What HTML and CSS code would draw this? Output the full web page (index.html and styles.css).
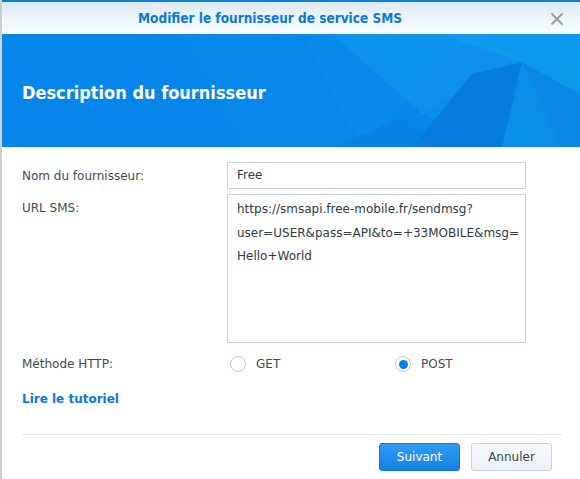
FILE: index.html
```html
<!DOCTYPE html>
<html lang="fr">
<head>
<meta charset="utf-8">
<title>Modifier le fournisseur de service SMS</title>
<link rel="stylesheet" href="styles.css">
</head>
<body>
<div class="dialog">
  <div class="topline"></div>
  <div class="titlebar">
    <span class="title">Modifier le fournisseur de service SMS</span>
    <svg class="close" width="14" height="14" viewBox="0 0 14 14"><path d="M1.5 1.5 L12.5 12.5 M12.5 1.5 L1.5 12.5" stroke="#9c9c9c" stroke-width="1.8" fill="none"/></svg>
  </div>
  <div class="banner">
    <svg class="banner-bg" width="578" height="113" viewBox="0 0 578 113" preserveAspectRatio="none">
      <rect x="0" y="0" width="578" height="113" fill="#0685ea"/>
      <polygon points="180,0 330,0 380,113 240,113" fill="#0a88ea" opacity="0.6"/>
      <polygon points="300,0 470,0 360,113" fill="#0b8eec" opacity="0.6"/>
      <polygon points="330,0 480,0 520,28 420,80" fill="#1399ec" opacity="0.6"/>
      <polygon points="440,0 578,0 578,18 520,28" fill="#12a0ee" opacity="0.7"/>
      <polygon points="420,80 520,28 578,80 578,113 500,113" fill="#0a8fe7"/>
      <polygon points="520,28 578,10 578,80" fill="#0b9aea"/>
      <polygon points="410,113 470,40 520,28 500,113" fill="#0877d9" opacity="0.8"/>
      <polygon points="330,113 400,85 430,113" fill="#0a7fe0" opacity="0.8"/>
      <polygon points="520,28 560,113 578,113 578,60" fill="#0a84e2" opacity="0.8"/>
    </svg>
    <h1 class="banner-title">Description du fournisseur</h1>
  </div>
  <div class="form">
    <div class="row">
      <label class="label">Nom du fournisseur:</label>
      <div class="field input">Free</div>
    </div>
    <div class="row">
      <label class="label">URL SMS:</label>
      <div class="field textarea">https://smsapi.free-mobile.fr/sendmsg?<br>user=USER&amp;pass=API&amp;to=+33MOBILE&amp;msg=<br>Hello+World</div>
    </div>
    <div class="row radio-row">
      <label class="label">Méthode HTTP:</label>
      <div class="radios">
        <span class="radio"><span class="dot"></span>GET</span>
        <span class="radio checked"><span class="dot"></span>POST</span>
      </div>
    </div>
    <a class="link" href="#">Lire le tutoriel</a>
  </div>
  <div class="footer">
    <button class="btn primary">Suivant</button>
    <button class="btn">Annuler</button>
  </div>
</div>
</body>
</html>
```
FILE: styles.css
```css
html, body {
  margin: 0;
  padding: 0;
  height: 100%;
}
body {
  background: #cfcfcf;
  font-family: "DejaVu Sans", Verdana, sans-serif;
  overflow: hidden;
}
.dialog {
  margin-left: 2px;
  width: 578px;
  height: 479px;
  background: #ffffff;
  display: flex;
  flex-direction: column;
}
.topline {
  height: 2px;
  background: #0b7fe0;
}
.titlebar {
  height: 32px;
  position: relative;
  display: flex;
  align-items: center;
  padding-left: 136px;
  background: linear-gradient(#dcebf8, #fbfdff);
}
.title {
  color: #0a7ad5;
  font-weight: bold;
  font-size: 13.5px;
  font-stretch: condensed;
}
.close {
  position: absolute;
  right: 16px;
  top: 10px;
}
.banner {
  height: 113px;
  position: relative;
  overflow: hidden;
  display: flex;
  align-items: center;
}
.banner-bg {
  position: absolute;
  left: 0;
  top: 0;
}
.banner-title {
  position: relative;
  margin: 0 0 0 20px;
  padding-top: 4px;
  color: #ffffff;
  font-size: 18px;
  font-stretch: condensed;
  font-weight: bold;
}
.form {
  padding: 15px 0 0 20px;
  display: flex;
  flex-direction: column;
  gap: 5px;
  font-size: 12px;
  color: #414b55;
}
.row {
  display: flex;
}
.label {
  width: 205px;
  padding-top: 7px;
}
.field {
  width: 299px;
  box-sizing: border-box;
  border: 1px solid #c6d0da;
  color: #303a44;
}
.input {
  height: 27px;
  padding: 0 9px;
  line-height: 25px;
}
.textarea {
  height: 149px;
  padding: 3px 9px;
  line-height: 23.5px;
}
.radio-row {
  margin-top: 8px;
  align-items: center;
}
.radio-row .label {
  padding-top: 0;
}
.radios {
  display: flex;
}
.radio {
  display: flex;
  align-items: center;
  width: 162px;
  gap: 10px;
  padding-left: 3px;
  color: #414b55;
  font-size: 12px;
}
.dot {
  width: 16px;
  height: 16px;
  box-sizing: border-box;
  border: 1px solid #bfcbd7;
  border-radius: 50%;
  background: #fff;
  display: flex;
  align-items: center;
  justify-content: center;
}
.checked .dot::after {
  content: "";
  width: 9px;
  height: 9px;
  border-radius: 50%;
  background: #0a7ee8;
}
.link {
  margin-top: 15px;
  color: #0a7ad5;
  font-weight: bold;
  font-size: 12px;
  text-decoration: none;
}
.footer {
  margin: 28px 18px 0 20px;
  border-top: 1px solid #e1e4e8;
  padding-top: 8px;
  display: flex;
  justify-content: flex-end;
  gap: 11px;
  padding-right: 10px;
}
.btn {
  width: 81px;
  height: 28px;
  border-radius: 3px;
  border: 1px solid #c6d1dd;
  background: linear-gradient(#f6f9fc, #edf2f8);
  color: #3d434a;
  font-family: "DejaVu Sans", Verdana, sans-serif;
  font-size: 12px;
  padding: 0;
}
.btn.primary {
  border-color: #1476d6;
  background: linear-gradient(#2f9bf2, #1882e6);
  color: #ffffff;
}
```
